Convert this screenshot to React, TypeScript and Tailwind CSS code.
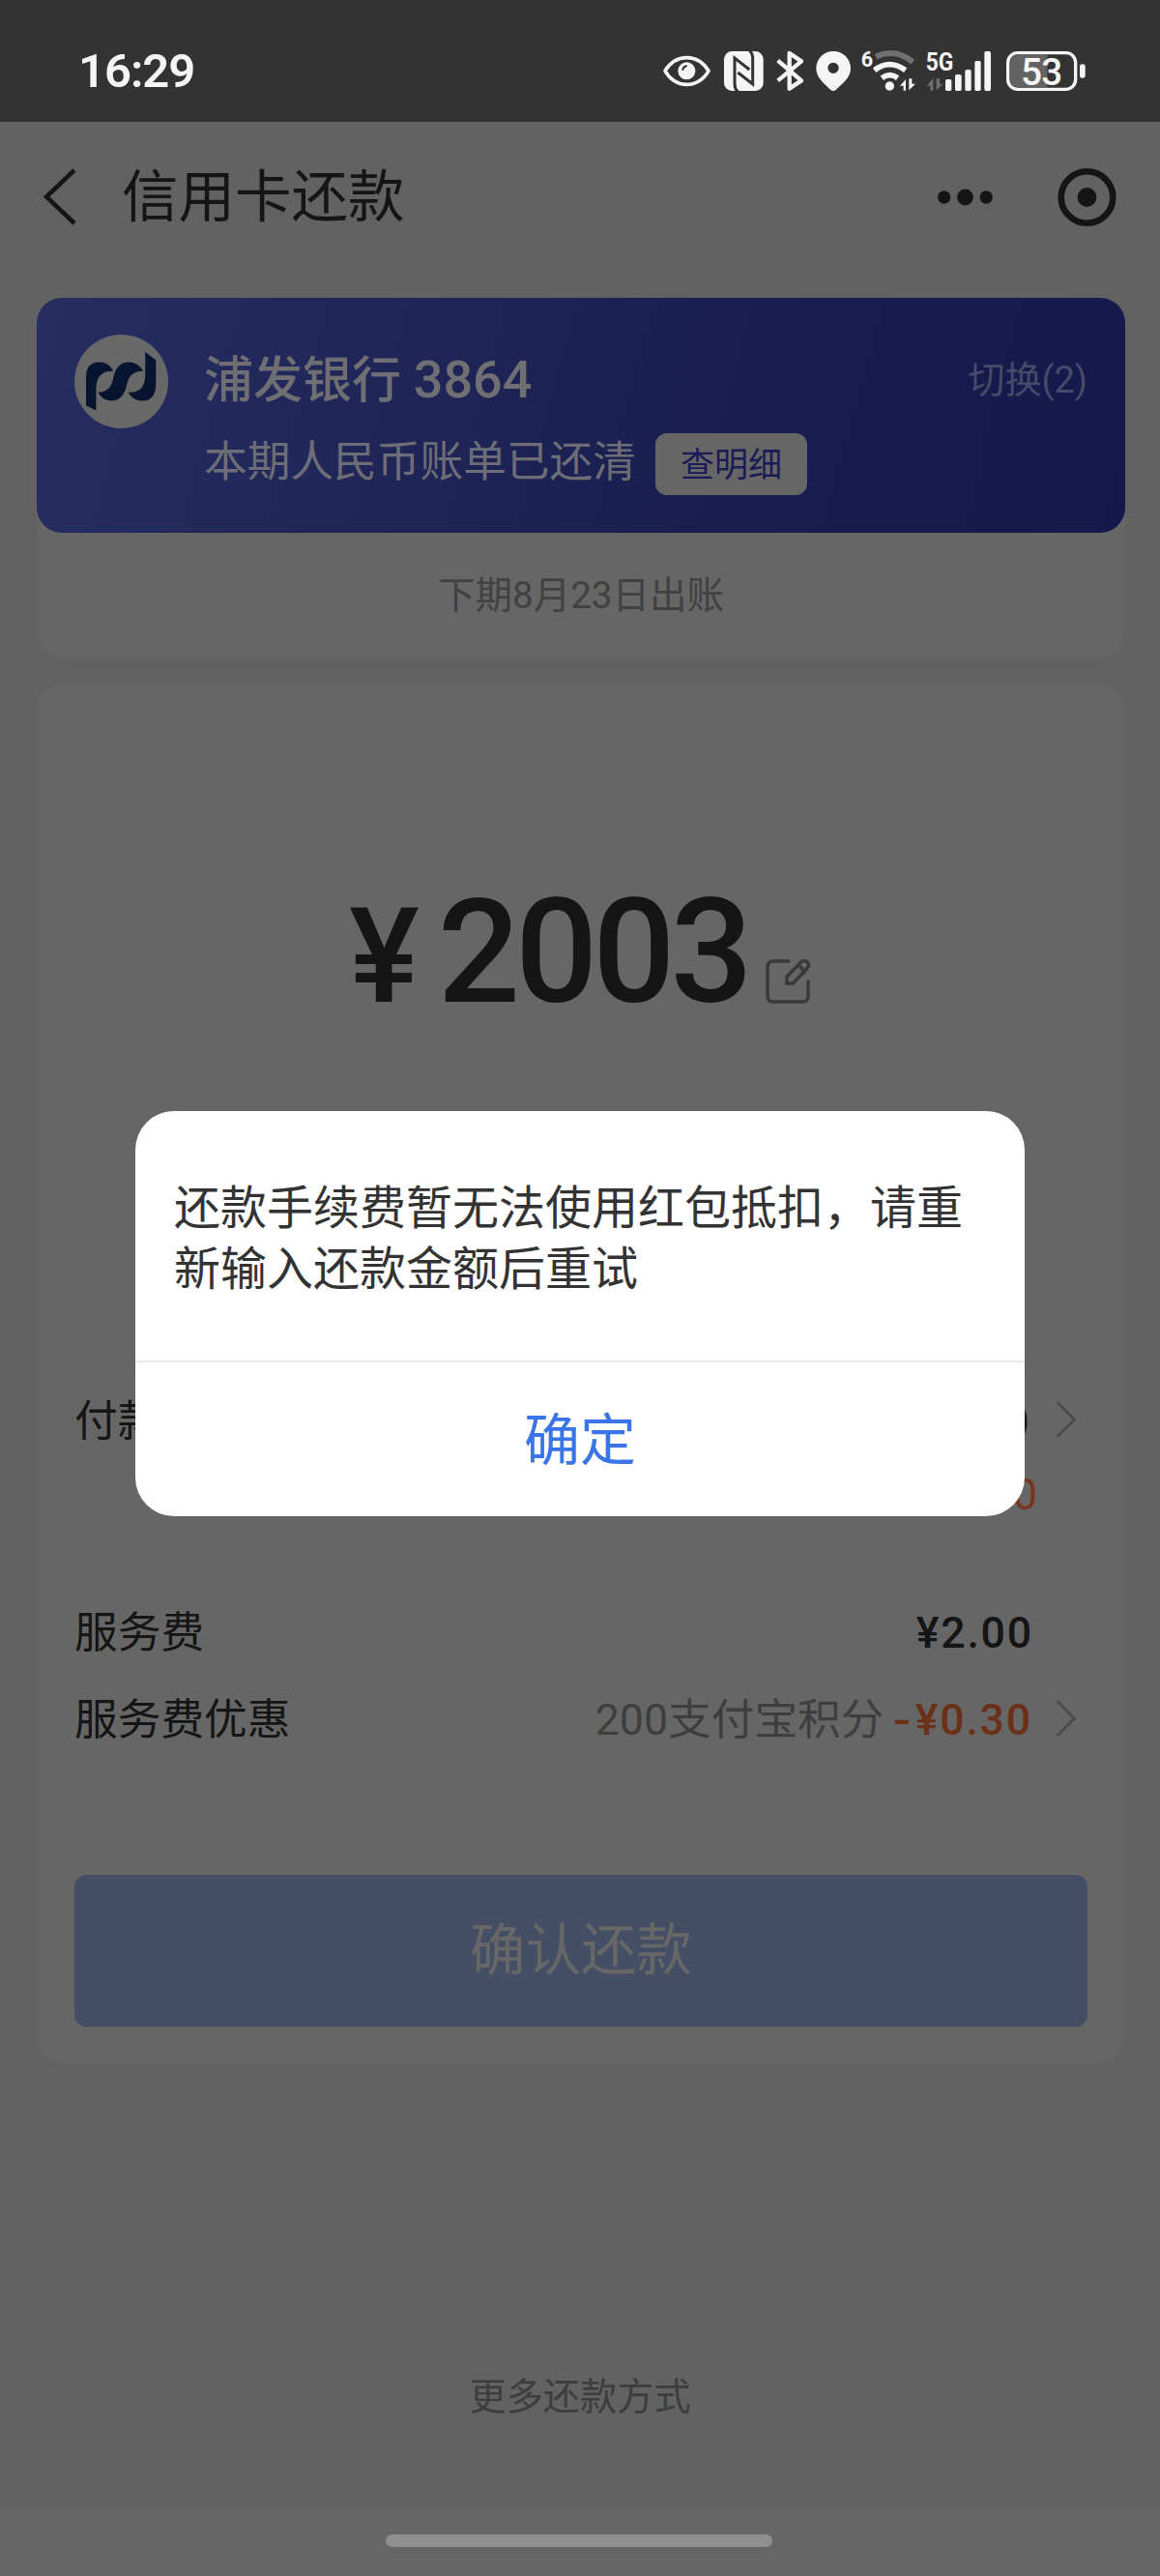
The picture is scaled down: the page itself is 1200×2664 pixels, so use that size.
import React from "react";

const INK = "#f5f5f5";

function StatusIcons() {
  return (
    <div className="flex h-[47px]">
      {/* eye comfort */}
      <svg className="h-[47px] w-[57px]" viewBox="75 90 171 141" fill="none">
        <path d="M84 160C100 134 124 119 151 119S203 134 219 160C203 187 178 202 151 202S100 187 84 160Z" stroke={INK} strokeWidth="11" strokeLinejoin="round" />
        <circle cx="151" cy="160" r="27" fill={INK} />
        <path d="M139 156q2-9 11-11" stroke="#333" strokeWidth="6" strokeLinecap="round" />
      </svg>
      {/* nfc */}
      <svg className="h-[47px] w-[55px]" viewBox="246 90 165 141" fill="none">
        <rect x="267" y="99" width="122" height="123" rx="25" fill={INK} />
        <path d="M310 224Q300 216 300 200V120L346 156" stroke="#333" strokeWidth="9" />
        <path d="M346 97Q356 105 356 121V201L310 165" stroke="#333" strokeWidth="9" />
      </svg>
      {/* bluetooth */}
      <svg className="h-[47px] w-10" viewBox="411 90 120 141" fill="none">
        <path d="M434 128L507 190L470 215V105L507 130L434 190" stroke={INK} strokeWidth="13" strokeLinecap="butt" strokeLinejoin="round" />
      </svg>
      {/* location */}
      <svg className="h-[47px] w-[49px]" viewBox="531 90 147 141">
        <path fillRule="evenodd" fill={INK} d="M606 99C636 99 660 122 660 152C660 178 640 194 614 219Q606 225 598 219C572 194 553 178 553 152C553 122 577 99 606 99ZM606 134A17 17 0 1 0 606 168A17 17 0 1 0 606 134Z" />
      </svg>
      {/* wifi */}
      <svg className="h-[47px] w-[67px] overflow-visible" viewBox="678 90 201 141" fill="none">
        <text x="692" y="146" fill={INK} fontFamily="Roboto" fontWeight="700" fontSize="68" textLength="37" lengthAdjust="spacingAndGlyphs">6</text>
        <path d="M738 116Q800 88 853 133" stroke="#707070" strokeWidth="18" />
        <path d="M734 158Q780 122 830 158" stroke={INK} strokeWidth="17" />
        <path d="M757 182Q781 164 806 182" stroke={INK} strokeWidth="17" />
        <circle cx="781" cy="207" r="14" fill={INK} />
        <path d="M831 221V186L813 206H824V221ZM841 184V220L861 200H850V184Z" fill={INK} />
      </svg>
      {/* cellular */}
      <svg className="h-[47px] w-20 overflow-visible" viewBox="879 90 240 141" fill="none">
        <text x="893" y="159" fill={INK} fontFamily="Roboto" fontWeight="700" fontSize="78" textLength="86" lengthAdjust="spacingAndGlyphs">5G</text>
        <path d="M916 221V184L896 206H907V221ZM926 184V220L947 200H936V184Z" fill="#707070" />
        <rect x="954" y="186" width="19" height="36" rx="5" fill={INK} />
        <rect x="984" y="171" width="20" height="51" rx="5" fill={INK} />
        <rect x="1015" y="156" width="19" height="66" rx="5" fill={INK} />
        <rect x="1045" y="129" width="19" height="93" rx="5" fill={INK} />
        <rect x="1075" y="99" width="20" height="123" rx="5" fill={INK} />
      </svg>
      {/* battery */}
      <svg className="h-[47px] w-[94px] overflow-visible" viewBox="1119 90 282 141" fill="none">
        <path d="M1182 110H1270V210H1182Q1155 210 1155 183V137Q1155 110 1182 110Z" fill="#636363" />
        <rect x="1148" y="104" width="210" height="113" rx="30" stroke={INK} strokeWidth="10" />
        <rect x="1371" y="139" width="17" height="43" rx="8" fill={INK} />
        <text x="1188" y="203" fill={INK} fontFamily="Roboto" fontWeight="500" fontSize="116" textLength="130">53</text>
      </svg>
    </div>
  );
}

function BankLogo() {
  return (
    <div className="mt-[38px] size-[97px] shrink-0 rounded-full bg-[#686868]">
      <svg className="size-[97px]" viewBox="21 17 290 290" fill="#06142f">
        <path d="M57 237V148Q57 102 97 102Q128 102 141 130Q90 128 88 182V252Z" />
        <path d="M94 195Q132 196 141 152Q150 102 191 102Q220 104 234 130Q192 130 184 168Q174 222 134 222Q106 220 94 195Z" />
        <path d="M187 195Q239 200 240 140V71L273 96V168Q273 222 231 222Q200 222 187 195Z" />
      </svg>
    </div>
  );
}

function Chevron() {
  return (
    <svg className="ml-[26px] h-[40px] w-[26px]" viewBox="0 0 26 40" fill="none" stroke="#4a4a4a" strokeWidth="2.600">
      <path d="M2.500 2L20.500 20L2.500 38" />
    </svg>
  );
}

export default function App() {
  return (
    <div className="relative flex h-[2664px] w-[1200px] flex-col overflow-hidden bg-[#626262] font-[Roboto,'Noto_Sans_CJK_SC',sans-serif] text-[#151515]">
      <div className="flex h-[126px] shrink-0 items-start justify-between bg-[#333333] pr-[73px] pl-[81px]">
        <span className="mt-[44px] text-[49px] leading-[60px] font-semibold tracking-[-1px] text-[#f5f5f5]">16:29</span>
        <div className="mt-[50px]">
          <StatusIcons />
        </div>
      </div>

      <div className="flex h-[182px] shrink-0 items-start pr-[45px] pl-[43px]">
        <svg className="mt-[48px] h-[60px] w-[36px]" viewBox="0 0 36 60" fill="none" stroke="#151515" strokeWidth="4.500">
          <path d="M34 2L5 29.500L34 57" />
        </svg>
        <h1 className="ml-[47px] mt-[43px] text-[58.500px] leading-[70px]">信用卡还款</h1>
        <div className="ml-auto mt-[47px] flex items-center gap-[65px]">
          <svg className="h-[60px] w-[60px]" viewBox="0 0 60 60" fill="#151515">
            <circle cx="8.700" cy="30" r="6.700" />
            <circle cx="30.500" cy="30" r="8.400" />
            <circle cx="52.200" cy="30" r="6.700" />
          </svg>
          <svg className="h-[62px] w-[62px]" viewBox="0 0 62 62">
            <circle cx="31.500" cy="31" r="26.800" fill="none" stroke="#151515" strokeWidth="6.600" />
            <circle cx="31.500" cy="31" r="9.900" fill="#151515" />
          </svg>
        </div>
      </div>

      <section className="ml-[38px] h-[373px] w-[1126px] shrink-0 rounded-[28px] bg-[#666666]">
        <div className="flex h-[243px] rounded-[26px] bg-[linear-gradient(105deg,#262d61_0%,#1e2455_40%,#191d50_65%,#15184a_100%)] pr-[39px] pl-[39px]">
          <BankLogo />
          <div className="ml-[37px] mt-[53px]">
            <div className="text-[51px] leading-[66px] font-medium whitespace-pre text-[#6f6f73]">浦发银行 <span className="text-[54px] leading-[60px]">3864</span></div>
            <div className="mt-[21px] flex h-[64px] items-center">
              <span className="-mt-[5px] text-[44.700px] leading-[60px] text-[#6d6d77]">本期人民币账单已还清</span>
              <span className="ml-[20px] flex h-[64px] w-[157px] items-center justify-center rounded-[12px] bg-[#666666] pt-[3px] text-[35px] leading-[60px] text-[#1b1b55]">查明细</span>
            </div>
          </div>
          <span className="ml-auto mt-[55px] text-[38px] leading-[60px] text-[#474a69]">切换(2)</span>
        </div>
        <p className="mt-[35px] text-center text-[38.500px] leading-[60px] text-[#414141]">下期8月23日出账</p>
      </section>

      <section className="mt-[26px] ml-[38px] h-[1427px] w-[1126px] shrink-0 rounded-[28px] bg-[#666666] px-[39px]">
        <div className="flex h-[331px] items-end pl-[284px]">
          <div className="mb-[-5px] flex items-baseline font-medium">
            <span className="text-[137px] leading-[108px]">¥</span>
            <span className="ml-[19px] text-[150px] leading-[108px] tracking-[-5px]">2003</span>
          </div>
          <svg className="ml-[18px] h-[48px] w-[48px]" viewBox="0 0 48 48" fill="none" stroke="#393939" strokeWidth="3.500" strokeLinecap="round" strokeLinejoin="round">
            <path d="M24 4H8Q2 4 2 10V40Q2 46 8 46H38Q44 46 44 40V25" />
            <path d="M22 27V20L36.500 5Q40 2 43 5Q46 8 43 11.500L28.500 27ZM34 8L40 14" />
          </svg>
        </div>

        <div className="mt-[405px] flex h-[50px] items-center text-[44.700px] leading-[50px]">
          <span className="mt-[4px]">付款方式</span>
          <span className="ml-auto font-medium">)</span>
          <Chevron />
          <span className="w-[8px]" />
        </div>
        <div className="mt-[28px] h-[50px] pr-[52px] text-right text-[45px] leading-[50px] text-[#77351d]">0</div>
        <hr className="mt-[46px] h-[2px] border-0 bg-[#646464]" />
        <div className="mt-[43px] flex h-[50px] items-center text-[44.700px] leading-[50px]">
          <span className="mt-[3px]">服务费</span>
          <span className="ml-auto mt-[3px] pr-[56px] font-medium tracking-[1.800px]">¥2.00</span>
        </div>
        <div className="mt-[40px] flex h-[50px] items-center text-[44.700px] leading-[50px]">
          <span className="mt-[3px]">服务费优惠</span>
          <span className="ml-auto mt-[3px] text-[#3e3e3e]">200支付宝积分</span>
          <span className="mt-[3px] mr-[-3px] ml-[14px] font-medium text-[#6b3018]"><span className="inline-block origin-right scale-x-125 tracking-[3px]">-</span><span className="tracking-[1.800px]">¥0.30</span></span>
          <Chevron />
          <span className="w-[8px]" />
        </div>
        <button className="mt-[137px] flex h-[157px] w-full items-center justify-center rounded-[12px] bg-[#444e65] pt-[2px] text-[57.500px] text-[#676767]">确认还款</button>
      </section>

      <p className="mt-[315px] text-center text-[38.200px] leading-[60px] text-[#3d3d3d]">更多还款方式</p>

      <div className="mt-auto flex h-[72px] shrink-0 bg-[#666666] pt-[29px] pl-[399px]">
        <div className="h-[13px] w-[400px] rounded-full bg-[#8f8f8f]" />
      </div>

      <div role="dialog" className="absolute top-[1149px] left-[140px] flex h-[419px] w-[920px] flex-col rounded-[40px] bg-white">
        <p className="h-[258px] px-[40px] pt-[69px] text-[48px] leading-[63px] text-[#333333]">还款手续费暂无法使用红包抵扣，请重新输入还款金额后重试</p>
        <button className="flex flex-1 items-center justify-center border-t-2 border-[#ebebeb] pt-[3px] text-[58px] leading-[70px] text-[#3a75e8]">确定</button>
      </div>
    </div>
  );
}
